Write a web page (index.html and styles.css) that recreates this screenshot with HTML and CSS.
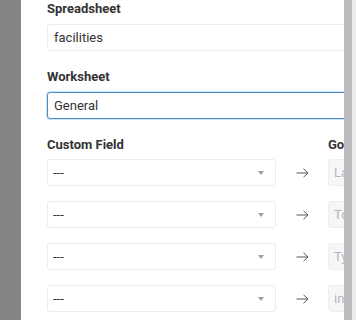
FILE: index.html
```html
<!DOCTYPE html>
<html lang="en">
<head>
  <meta charset="UTF-8" />
  <meta name="viewport" content="width=device-width, initial-scale=1.0"/>
  <title>Sheet Mapping</title>
  <link rel="stylesheet" href="styles.css">
</head>
<body>
  <div class="backdrop"></div>

  <div class="panel">
    <div class="field-group">
      <label for="spreadsheet">Spreadsheet</label>
      <input type="text" id="spreadsheet" value="facilities">
    </div>

    <div class="field-group">
      <label for="worksheet">Worksheet</label>
      <input type="text" id="worksheet" class="focused" value="General">
    </div>

    <div class="mapping">
      <div class="mapping-head">Custom Field</div>
      <div></div>
      <div class="mapping-head">Google Column</div>

      <div class="select-box">---<span class="caret"></span></div>
      <div class="arrow"><svg width="13" height="10" viewBox="0 0 13 10"><path d="M0.5 5H12M7.5 0.8L12 5L7.5 9.2" fill="none" stroke="#555" stroke-width="1"/></svg></div>
      <div class="target">Last Name</div>

      <div class="select-box">---<span class="caret"></span></div>
      <div class="arrow"><svg width="13" height="10" viewBox="0 0 13 10"><path d="M0.5 5H12M7.5 0.8L12 5L7.5 9.2" fill="none" stroke="#555" stroke-width="1"/></svg></div>
      <div class="target">Total</div>

      <div class="select-box">---<span class="caret"></span></div>
      <div class="arrow"><svg width="13" height="10" viewBox="0 0 13 10"><path d="M0.5 5H12M7.5 0.8L12 5L7.5 9.2" fill="none" stroke="#555" stroke-width="1"/></svg></div>
      <div class="target">Type</div>

      <div class="select-box">---<span class="caret"></span></div>
      <div class="arrow"><svg width="13" height="10" viewBox="0 0 13 10"><path d="M0.5 5H12M7.5 0.8L12 5L7.5 9.2" fill="none" stroke="#555" stroke-width="1"/></svg></div>
      <div class="target">info</div>
    </div>
  </div>

  <div class="scrollbar"></div>
  <div class="edge"></div>
</body>
</html>
```

FILE: styles.css
```css
* {
  margin: 0;
  padding: 0;
  box-sizing: border-box;
  font-family: Roboto, 'Liberation Sans', sans-serif;
}

body {
  display: flex;
  width: 356px;
  height: 320px;
  overflow: hidden;
  background: #fff;
}

.backdrop {
  width: 21px;
  flex-shrink: 0;
  background: #858585;
}

.panel {
  width: 323px;
  flex-shrink: 0;
  overflow: hidden;
  background: #fff;
  padding: 1px 0 0 26px;
}

.scrollbar {
  width: 8px;
  flex-shrink: 0;
  background: #bbbbc0;
}

.edge {
  width: 4px;
  flex-shrink: 0;
  background: #ececec;
}

.field-group {
  margin-bottom: 18px;
}

.field-group label,
.mapping-head {
  display: block;
  font-size: 13px;
  line-height: 15px;
  font-weight: 700;
  color: #333;
  white-space: nowrap;
}

.field-group label {
  margin-bottom: 8px;
}

.field-group input {
  display: block;
  width: 310px;
  height: 27px;
  padding: 0 6px;
  border: 1px solid #ececec;
  border-radius: 3px;
  font-size: 13px;
  color: #333;
  background: #fff;
  outline: none;
}

.field-group input.focused {
  border-color: #4a8cc4;
  box-shadow: 0 0 0 1px rgba(120, 180, 225, 0.35);
}

.mapping {
  display: grid;
  grid-template-columns: 229px 52px 60px;
  row-gap: 15px;
  align-items: center;
  margin-top: 2px;
}

.mapping-head {
  margin-bottom: -8px;
}

.select-box {
  position: relative;
  height: 27px;
  line-height: 25px;
  padding: 0 5px;
  border: 1px solid #ececec;
  border-radius: 3px;
  font-size: 13px;
  color: #333;
}

.caret {
  position: absolute;
  right: 11px;
  top: 11px;
  border-left: 3px solid transparent;
  border-right: 3px solid transparent;
  border-top: 4px solid #a0a0a0;
}

.arrow {
  display: flex;
  justify-content: center;
  align-items: center;
  height: 27px;
}

.target {
  height: 27px;
  line-height: 25px;
  padding: 0 5px;
  border: 1px solid #eeeeee;
  border-radius: 3px;
  background: #f6f6f6;
  font-size: 13px;
  color: #b5b5b5;
  white-space: nowrap;
  overflow: hidden;
}
```
